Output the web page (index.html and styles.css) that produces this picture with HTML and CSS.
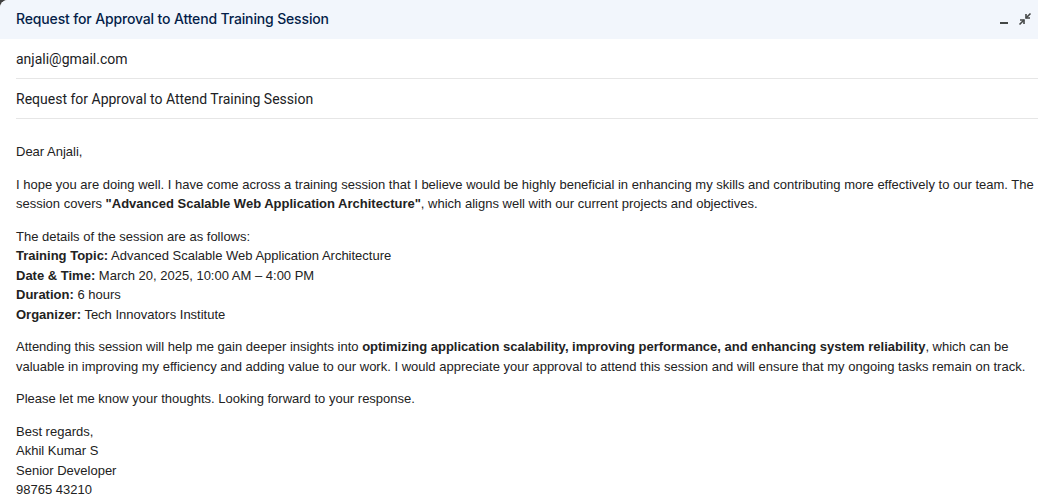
FILE: index.html
```html
<!DOCTYPE html>
<html lang="en">
<head>
<meta charset="utf-8">
<title>Request for Approval to Attend Training Session</title>
<link rel="stylesheet" href="styles.css">
</head>
<body>
<div class="window">
  <header class="titlebar">
    <span class="title">Request for Approval to Attend Training Session</span>
    <div class="controls">
      <svg class="icon" width="14" height="14" viewBox="0 0 14 14" aria-hidden="true"><rect x="2" y="10" width="8" height="2" fill="#444746"/></svg>
      <svg class="icon" width="14" height="14" viewBox="0 0 14 14" aria-hidden="true">
        <path d="M8 2v4h4" fill="none" stroke="#444746" stroke-width="1.6"/>
        <path d="M8 6l4.5-4.5" stroke="#444746" stroke-width="1.6"/>
        <path d="M6 12V8H2" fill="none" stroke="#444746" stroke-width="1.6"/>
        <path d="M6 8l-4.5 4.5" stroke="#444746" stroke-width="1.6"/>
      </svg>
    </div>
  </header>
  <div class="field">anjali@gmail.com</div>
  <div class="field">Request for Approval to Attend Training Session</div>
  <div class="content">
    <p>Dear Anjali,</p>
    <p>I hope you are doing well. I have come across a training session that I believe would be highly beneficial in enhancing my skills and contributing more effectively to our team. The session covers <b>"Advanced Scalable Web Application Architecture"</b>, which aligns well with our current projects and objectives.</p>
    <p>The details of the session are as follows:<br>
    <b>Training Topic:</b> Advanced Scalable Web Application Architecture<br>
    <b>Date &amp; Time:</b> March 20, 2025, 10:00 AM – 4:00 PM<br>
    <b>Duration:</b> 6 hours<br>
    <b>Organizer:</b> Tech Innovators Institute</p>
    <p>Attending this session will help me gain deeper insights into <b>optimizing application scalability, improving performance, and enhancing system reliability</b>, which can be valuable in improving my efficiency and adding value to our work. I would appreciate your approval to attend this session and will ensure that my ongoing tasks remain on track.</p>
    <p>Please let me know your thoughts. Looking forward to your response.</p>
    <p>Best regards,<br>
    Akhil Kumar S<br>
    Senior Developer<br>
    98765 43210</p>
  </div>
</div>
</body>
</html>
```
FILE: styles.css
```css
html, body {
  margin: 0;
  padding: 0;
  background: #404040;
}
.window {
  background: #ffffff;
  border-top-left-radius: 8px;
  min-height: 502px;
  overflow: hidden;
}
.titlebar {
  height: 39px;
  background: #f2f6fc;
  display: flex;
  align-items: center;
  justify-content: space-between;
  padding: 0 6px 2px 16px;
  box-sizing: border-box;
}
.title {
  font-family: Inter, Roboto, sans-serif;
  font-size: 14px;
  font-weight: 500;
  letter-spacing: -0.15px;
  color: #041e49;
}
.controls {
  display: flex;
  align-items: center;
  gap: 6px;
}
.icon {
  display: block;
}
.field {
  margin-left: 16px;
  height: 40px;
  display: flex;
  align-items: center;
  border-bottom: 1px solid #e6e6e6;
  box-sizing: border-box;
  font-family: Roboto, "Noto Sans", sans-serif;
  font-size: 14px;
  color: #202124;
}
.content {
  padding: 23px 0 0 16px;
  font-family: "Liberation Sans", Arial, sans-serif;
  font-size: 13px;
  line-height: 19.5px;
  color: #222222;
}
.content p {
  margin: 0 0 13px;
}
.content b {
  font-weight: bold;
}
```
